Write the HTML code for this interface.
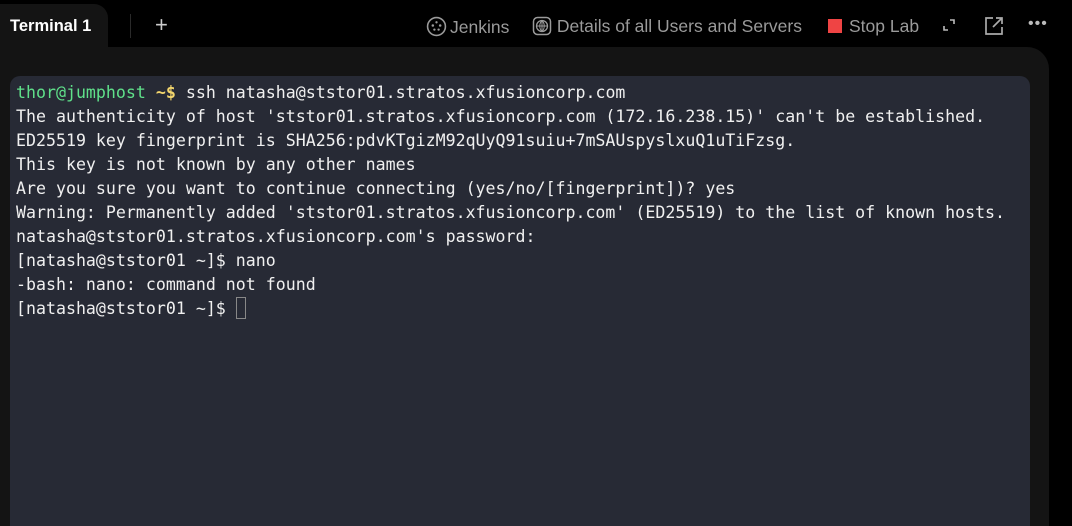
<!DOCTYPE html>
<html><head><style>
*{margin:0;padding:0;box-sizing:border-box}
body{width:1072px;height:526px;background:#000;overflow:hidden;position:relative;font-family:"Liberation Sans",sans-serif}
.tab{position:absolute;left:0;top:4px;width:108px;height:44px;background:#141414;border-top-right-radius:14px;color:#fff;font-weight:bold;font-size:16.5px;padding:13px 0 0 10px}
.sep{position:absolute;left:130px;top:14px;width:1px;height:24px;background:#2a2a2a}
.plus{position:absolute;left:155px;top:14px;color:#ccc;font-size:22px;line-height:22px}
.top{position:absolute;top:16px;color:#9a9a9a;font-size:17.5px;white-space:nowrap}
.panel{position:absolute;left:0;top:47px;width:1049px;height:479px;background:#141414;border-top-right-radius:22px}
.term{position:absolute;left:10px;top:76px;width:1020px;height:450px;background:#272a35;border-top-left-radius:10px;border-top-right-radius:10px}
pre{position:absolute;left:16px;top:81px;font-family:"DejaVu Sans Mono","Liberation Mono",monospace;font-size:16.6px;line-height:24px;color:#f0f0f0}
.g{color:#5fe08a}.y{color:#f5d76e;font-weight:bold}
.cur{display:inline-block;width:10px;height:22px;border:1px solid #888;vertical-align:-5px}
</style></head><body>
<div class="tab">Terminal 1</div>
<div class="sep"></div>
<div class="plus">+</div>
<div class="top" style="left:426px"><svg width="21" height="21" viewBox="0 0 20 20" style="vertical-align:-4px;margin-right:3px"><circle cx="10" cy="10" r="8.5" fill="none" stroke="#9a9a9a" stroke-width="1.5"/><circle cx="6.5" cy="9" r="1.2" fill="#9a9a9a"/><circle cx="13.5" cy="9" r="1.2" fill="#9a9a9a"/><circle cx="8" cy="13" r="1.1" fill="#9a9a9a"/><circle cx="12" cy="13" r="1.1" fill="#9a9a9a"/><circle cx="10" cy="6" r="1.1" fill="#9a9a9a"/></svg>Jenkins</div>
<div class="top" style="left:532px"><svg width="20" height="20" viewBox="0 0 20 20" style="vertical-align:-4px"><rect x="1.5" y="1.5" width="17" height="17" rx="4" fill="none" stroke="#9a9a9a" stroke-width="1.5"/><circle cx="10" cy="10" r="5.5" fill="none" stroke="#9a9a9a" stroke-width="1.3"/><path d="M4.5 10h11M10 4.5v11M10 4.5c-3 3-3 8 0 11M10 4.5c3 3 3 8 0 11" fill="none" stroke="#9a9a9a" stroke-width="1"/></svg> Details of all Users and Servers</div>
<div class="top" style="left:828px"><span style="display:inline-block;width:14px;height:14px;background:#ef4444;vertical-align:-1px;margin-right:7px"></span>Stop Lab</div>
<svg style="position:absolute;left:942px;top:18px" width="14" height="14" viewBox="0 0 14 14"><path d="M8 2h4v4M2 8v4h4" fill="none" stroke="#bbb" stroke-width="1.6"/></svg>
<svg style="position:absolute;left:984px;top:16px" width="20" height="20" viewBox="0 0 20 20"><path d="M9 2H2v16h16v-7M12 2h6v6M18 2L9 11" fill="none" stroke="#aaa" stroke-width="1.7"/></svg>
<div class="top" style="left:1028px;top:15px;color:#bbb;font-size:16px;letter-spacing:1px">•••</div>
<div class="panel"></div>
<div class="term"></div>
<pre><span class="g">thor@jumphost</span> <span class="y">~$</span> ssh natasha@ststor01.stratos.xfusioncorp.com
The authenticity of host 'ststor01.stratos.xfusioncorp.com (172.16.238.15)' can't be established.
ED25519 key fingerprint is SHA256:pdvKTgizM92qUyQ91suiu+7mSAUspyslxuQ1uTiFzsg.
This key is not known by any other names
Are you sure you want to continue connecting (yes/no/[fingerprint])? yes
Warning: Permanently added 'ststor01.stratos.xfusioncorp.com' (ED25519) to the list of known hosts.
natasha@ststor01.stratos.xfusioncorp.com's password: 
[natasha@ststor01 ~]$ nano
-bash: nano: command not found
[natasha@ststor01 ~]$ <span class="cur"></span></pre>
</body></html>
